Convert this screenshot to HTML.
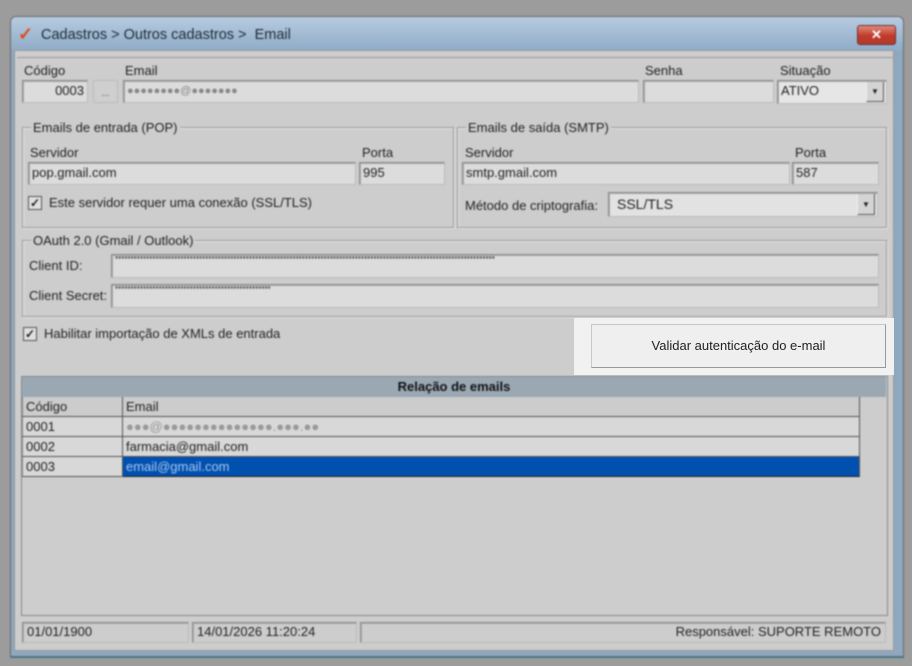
<!DOCTYPE html>
<html><head><meta charset="utf-8"><style>
*{box-sizing:border-box;margin:0;padding:0}
body{width:912px;height:666px;background:#9c9c9c;font-family:"Liberation Sans",sans-serif;font-size:13px;color:#222;position:relative;overflow:hidden}
.a{position:absolute}
#blur{position:absolute;left:0;top:0;width:912px;height:666px;filter:blur(0.7px)}
.inp{position:absolute;background:#dcdcdc;border:1px solid #8a8a8a;border-right-color:#bbb;border-bottom-color:#bbb;box-shadow:inset 1px 1px 0 #a8a8a8;padding:2px 3px;font-size:13px;line-height:16px;white-space:nowrap;overflow:hidden}
.grp{position:absolute;border:1px solid #9a9a9a;box-shadow:1px 1px 0 #e4e4e4,inset 1px 1px 0 #e4e4e4}
.gt{position:absolute;top:-8px;left:8px;background:#cdcdcd;padding:0 2px;font-size:13px}
.lbl{position:absolute;font-size:13px}
.cb{position:absolute;width:14px;height:14px;border:1px solid #555;background:#e0e0e0;font-size:12px;line-height:12px;text-align:center;font-weight:bold}
.cell{position:absolute;border-right:1px solid #555;border-bottom:1px solid #555;height:20px;padding:2px 3px;font-size:13px;line-height:15px;background:#d8d8d8;white-space:nowrap}
.dd{position:absolute;width:18px;background:#d4d4d4;border-left:1px solid #eee;border-right:1px solid #555;border-bottom:1px solid #555;font-size:8px;text-align:center}
</style></head><body>
<div id="blur">
<div class="a" style="left:10px;top:16px;width:894px;height:641px;background:#8ea8c0;border:1px solid #6a6a6a;border-radius:6px 6px 0 0;box-shadow:0 1px 0 #2f7f98"></div>
<div class="a" style="left:11px;top:17px;width:892px;height:34px;background:linear-gradient(#b6cbe0,#8fabc7);border-radius:5px 5px 0 0"></div>
<div class="a" style="left:18px;top:24px;font-size:18px;color:#e34a1a;font-weight:bold;line-height:20px">✓</div>
<div class="a" style="left:41px;top:27px;font-size:14.5px;color:#1e2a38">Cadastros &gt; Outros cadastros &gt;&nbsp; Email</div>
<div class="a" style="left:857px;top:25px;width:39px;height:20px;background:linear-gradient(#e08a7a,#c0392b 55%,#b33a2a);border:1px solid #6a3030;border-radius:3px;color:#fff;text-align:center;font-size:13px;line-height:17px;font-weight:bold">✕</div>
<div class="a" style="left:14px;top:50px;width:880px;height:601px;background:#cdcdcd;border:1px solid #999"></div>
<div class="a" style="left:17px;top:57px;width:877px;height:1px;background:#9a9a9a"></div>

<div class="lbl" style="left:24px;top:63px">Código</div>
<div class="lbl" style="left:125px;top:63px">Email</div>
<div class="lbl" style="left:645px;top:63px">Senha</div>
<div class="lbl" style="left:780px;top:63px">Situação</div>
<div class="inp" style="left:22px;top:80px;width:66px;height:23px;text-align:right">0003</div>
<div class="a" style="left:93px;top:80px;width:25px;height:23px;background:#cfcfcf;border:1px solid #bbb;text-align:center;line-height:26px;font-size:10px;color:#555">...</div>
<div class="inp" style="left:123px;top:80px;width:516px;height:23px;color:#888;font-size:11px">●●●●●●●●@●●●●●●●</div>
<div class="inp" style="left:643px;top:80px;width:131px;height:23px"></div>
<div class="inp" style="left:777px;top:80px;width:110px;height:24px;background:#e6e6e6">ATIVO</div>
<div class="dd" style="left:866px;top:82px;height:20px;line-height:20px">▼</div>

<div class="grp" style="left:22px;top:127px;width:432px;height:101px"><div class="gt">Emails de entrada (POP)</div></div>
<div class="lbl" style="left:30px;top:145px">Servidor</div>
<div class="lbl" style="left:362px;top:145px">Porta</div>
<div class="inp" style="left:28px;top:162px;width:328px;height:23px">pop.gmail.com</div>
<div class="inp" style="left:359px;top:162px;width:86px;height:23px">995</div>
<div class="cb" style="left:28px;top:196px">✓</div>
<div class="lbl" style="left:49px;top:195px">Este servidor requer uma conexão (SSL/TLS)</div>

<div class="grp" style="left:457px;top:127px;width:430px;height:101px"><div class="gt">Emails de saída (SMTP)</div></div>
<div class="lbl" style="left:465px;top:145px">Servidor</div>
<div class="lbl" style="left:795px;top:145px">Porta</div>
<div class="inp" style="left:462px;top:162px;width:328px;height:23px">smtp.gmail.com</div>
<div class="inp" style="left:792px;top:162px;width:87px;height:23px">587</div>
<div class="lbl" style="left:465px;top:198px">Método de criptografia:</div>
<div class="inp" style="left:608px;top:192px;width:270px;height:25px;background:#e2e2e2;font-size:14px;padding-left:8px;line-height:18px">SSL/TLS</div>
<div class="dd" style="left:857px;top:194px;height:21px;line-height:21px">▼</div>

<div class="grp" style="left:22px;top:240px;width:865px;height:77px"><div class="gt">OAuth 2.0 (Gmail / Outlook)</div></div>
<div class="lbl" style="left:29px;top:258px">Client ID:</div>
<div class="lbl" style="left:29px;top:288px">Client Secret:</div>
<div class="inp" style="left:111px;top:254px;width:768px;height:24px;font-size:8px;line-height:6px">**************************************************************************************************************************</div>
<div class="inp" style="left:111px;top:284px;width:768px;height:24px;font-size:8px;line-height:6px">**************************************************</div>

<div class="cb" style="left:23px;top:327px">✓</div>
<div class="lbl" style="left:44px;top:326px">Habilitar importação de XMLs de entrada</div>

<div class="a" style="left:21px;top:376px;width:867px;height:240px;border:1px solid #888;background:#cdcdcd"></div>
<div class="a" style="left:22px;top:377px;width:864px;height:20px;background:#9aa8b4;text-align:center;font-weight:bold;font-size:13px;line-height:20px;color:#111">Relação de emails</div>
<div class="cell" style="left:22px;top:397px;width:101px;background:#cccccc;border-left:1px solid #888">Código</div>
<div class="cell" style="left:123px;top:397px;width:737px;background:#cccccc">Email</div>
<div class="cell" style="left:22px;top:417px;width:101px;border-left:1px solid #888">0001</div>
<div class="cell" style="left:123px;top:417px;width:737px;color:#999">●●●@●●●●●●●●●●●●●●.●●●.●●</div>
<div class="cell" style="left:22px;top:437px;width:101px;border-left:1px solid #888">0002</div>
<div class="cell" style="left:123px;top:437px;width:737px">farmacia@gmail.com</div>
<div class="cell" style="left:22px;top:457px;width:101px;border-left:1px solid #888">0003</div>
<div class="cell" style="left:123px;top:457px;width:737px;background:#0050b0;color:#a8c8f0;border-bottom-color:#222">email@gmail.com</div>

<div class="inp" style="left:22px;top:622px;width:167px;height:21px;background:#cdcdcd;padding:1px 4px">01/01/1900</div>
<div class="inp" style="left:192px;top:622px;width:165px;height:21px;background:#cdcdcd;padding:1px 4px">14/01/2026 11:20:24</div>
<div class="inp" style="left:360px;top:622px;width:526px;height:21px;background:#cdcdcd;padding:1px 4px;text-align:right">Responsável: SUPORTE REMOTO</div>
</div>
<div class="a" style="left:574px;top:318px;width:320px;height:57px;background:#f1f1f1"></div>
<div class="a" style="left:591px;top:324px;width:295px;height:44px;background:#efefef;border:1px solid #c8c8c8;border-right-color:#999;border-bottom-color:#999;text-align:center;line-height:42px;font-size:13px;color:#222">Validar autenticação do e-mail</div>
</body></html>
